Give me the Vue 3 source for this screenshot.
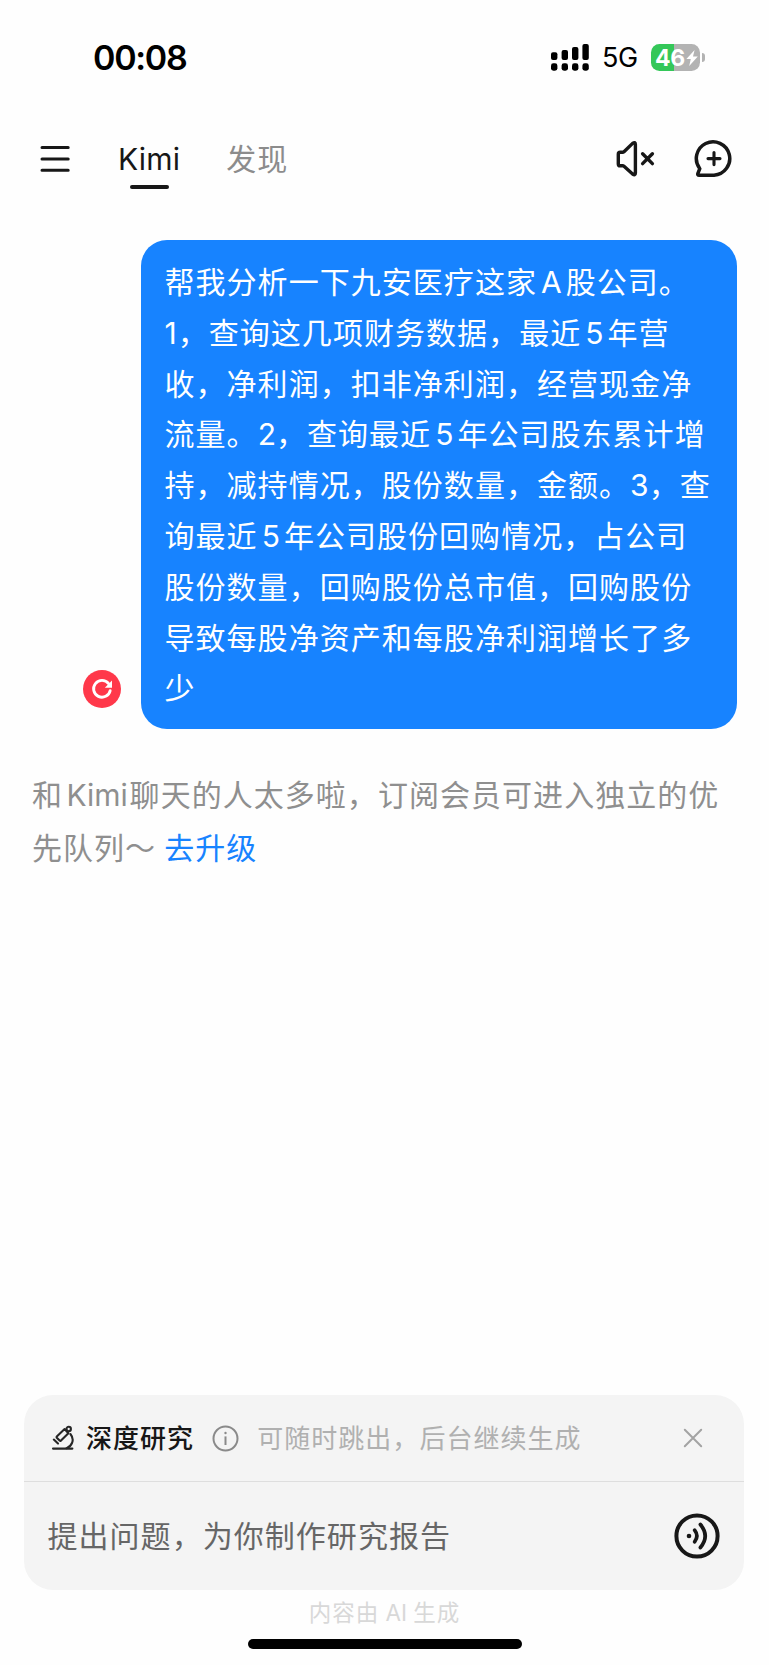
<template>
  <div class="screen">
    <div class="status-bar">
      <span class="clock">00:08</span>
      <div class="status-right">
        <svg class="signal" width="38" height="27" viewBox="0 0 38 27">
          <rect x="0" y="8.3" width="6.4" height="7.7" rx="2" />
          <rect x="10.6" y="6" width="6.4" height="10" rx="2" />
          <rect x="21" y="3" width="6.4" height="13" rx="2" />
          <rect x="31.4" y="0" width="6.4" height="16" rx="2" />
          <rect v-for="x in [0, 10.6, 21, 31.4]" :key="x" :x="x" y="19.3" width="6.4" height="7.4" rx="2.4" />
        </svg>
        <span class="network">5G</span>
        <div class="battery">
          <span class="battery-level">46</span>
          <svg width="12" height="16" viewBox="0 0 12 16">
            <path d="M8.6 0 L0.4 9 H4.8 L3.2 16 L11.8 6.6 H7 Z" fill="#fff" />
          </svg>
        </div>
        <span class="battery-nub"></span>
      </div>
    </div>

    <header class="nav">
      <svg class="menu" width="31" height="28" viewBox="0 0 31 28">
        <path d="M2 2.6H28.2M2 14H28.2M2 25.3H28.2" class="stroke" stroke-width="3" />
      </svg>
      <span class="tab tab--active">Kimi</span>
      <span class="tab">发现</span>
      <div class="nav-actions">
        <svg width="40" height="40" viewBox="0 0 40 40">
          <path d="M3.3 15.2 Q3.3 13.3 5.2 13.3 H7.6 Q8.4 13.3 9 12.8 L17.6 4.4 Q20.4 2.4 20.4 5.4 V34 Q20.4 37 17.6 35 L9 27.3 Q8.4 26.8 7.6 26.8 H5.2 Q3.3 26.8 3.3 24.9 Z" class="stroke" stroke-width="3.4" />
          <path d="M27.6 14.8 L37.4 24.6 M37.4 14.8 L27.6 24.6" class="stroke" stroke-width="3.4" />
        </svg>
        <svg width="40" height="40" viewBox="0 0 40 40">
          <path d="M20 36.2 H5.1 Q3.3 36.2 3.9 34.4 L5.8 29.7 A16.7 16.7 0 1 1 20 36.2 Z" class="stroke" stroke-width="3.5" />
          <path d="M20 13.6V25.6M14 19.6H26" class="stroke" stroke-width="3.1" />
        </svg>
      </div>
    </header>

    <main class="chat">
      <div class="message">
        <svg class="retry" width="38" height="38" viewBox="0 0 38 38">
          <circle cx="19" cy="19" r="19" fill="#ff384a" />
          <path d="M27.2 20.6 A8.4 8.4 0 1 1 25.6 13.6" stroke="#fff" stroke-width="2.8" stroke-linecap="round" fill="none" />
          <path d="M29 10.6 V17.8 H21.8 Z" fill="#fff" />
        </svg>
        <div class="bubble">
          <p v-for="(line, i) in lines" :key="i" class="bubble-line">
            <template v-for="(part, j) in line" :key="j">
              <span v-if="part.latin" class="latin" :class="part.cls">{{ part.latin }}</span>
              <template v-else>{{ part }}</template>
            </template>
          </p>
        </div>
      </div>

      <div class="notice">
        <p>和<span class="latin latin--kimi">Kimi</span>聊天的人太多啦，订阅会员可进入独立的优</p>
        <p>先队列～<a class="upgrade">去升级</a></p>
      </div>
    </main>

    <section class="composer">
      <div class="mode">
        <svg class="microscope" width="24" height="26" viewBox="0 0 24 26">
          <path d="M2 23.6H21.4" class="icon-line" />
          <path d="M2.8 14.6L7 18.6" class="icon-line" />
          <path d="M5.8 11.4L13.6 4L17.4 8.2L10 15.6Q9.2 16.2 8.6 15.6L5.8 12.8Q5.2 12 5.8 11.4Z" class="icon-line" />
          <circle cx="17.7" cy="4" r="2.2" class="icon-line" />
          <path d="M19.4 9Q23 13.4 21 18Q19.6 21.6 15.6 23.2" class="icon-line" />
        </svg>
        <span class="mode-name">深度研究</span>
        <svg class="info" width="27" height="27" viewBox="0 0 27 27">
          <circle cx="13.5" cy="13.5" r="12" />
          <path d="M13.5 11.4V20" />
          <circle cx="13.5" cy="8" r="1.2" class="info-dot" />
        </svg>
        <span class="mode-hint">可随时跳出，后台继续生成</span>
        <svg class="close" width="20" height="20" viewBox="0 0 20 20">
          <path d="M1.8 1.8L18.2 18.2M18.2 1.8L1.8 18.2" />
        </svg>
      </div>
      <div class="field">
        <span class="placeholder">提出问题，为你制作研究报告</span>
        <svg width="46" height="46" viewBox="0 0 46 46">
          <circle cx="23" cy="23" r="20.6" class="stroke" stroke-width="4" />
          <circle cx="15" cy="23" r="2.3" fill="#171717" />
          <path d="M20.6 17.2Q25.2 23 20.6 28.8" class="stroke" stroke-width="3.7" />
          <path d="M26.4 11.5Q36 23 26.4 34.5" class="stroke" stroke-width="3.7" />
        </svg>
      </div>
    </section>

    <footer class="footer">
      <p class="disclaimer">内容由 <span class="latin">AI</span> 生成</p>
      <div class="home-indicator"></div>
    </footer>
  </div>
</template>

<script setup>
const latin = (text, cls = 'latin--spaced') => ({ latin: text, cls })

const lines = [
  ['帮我分析一下九安医疗这家', latin('A'), '股公司。'],
  [latin('1', 'latin--one'), '，查询这几项财务数据，最近', latin('5'), '年营'],
  ['收，净利润，扣非净利润，经营现金净'],
  ['流量。', latin('2', ''), '，查询最近', latin('5'), '年公司股东累计增'],
  ['持，减持情况，股份数量，金额。', latin('3', ''), '，查'],
  ['询最近', latin('5'), '年公司股份回购情况，占公司'],
  ['股份数量，回购股份总市值，回购股份'],
  ['导致每股净资产和每股净利润增长了多'],
  ['少']
]
</script>

<style>
body {
  margin: 0;
  background: #fff;
}
</style>

<style scoped>
.screen {
  width: 769px;
  height: 1665px;
  display: flex;
  flex-direction: column;
  overflow: hidden;
  background: #fefefe;
  font-family: "Noto Sans CJK SC", sans-serif;
  font-size: 30px;
  letter-spacing: 1.04px;
  color: #171717;
}
p { margin: 0; white-space: nowrap; }
svg { display: block; flex: none; }
.stroke {
  fill: none;
  stroke: #171717;
  stroke-linecap: round;
  stroke-linejoin: round;
}
.latin { font-family: Inter, "Noto Sans CJK SC", sans-serif; letter-spacing: 0; }
.latin--spaced { margin: 0 4px 0 4px; }
.latin--one { margin-right: 1px; }
.latin--kimi { margin: 0 2px 0 3.5px; letter-spacing: -0.1px; }

/* status bar */
.status-bar {
  height: 115px;
  box-sizing: border-box;
  padding: 0 64px 0 93px;
  display: flex;
  align-items: center;
  justify-content: space-between;
  font-family: Inter, sans-serif;
  color: #000;
}
.clock { font-size: 34px; font-weight: 600; letter-spacing: -1.3px; }
.status-right { display: flex; align-items: center; }
.network {
  margin-left: 13px;
  width: 49px;
  font-size: 27px;
  letter-spacing: -0.3px;
}
.battery {
  width: 49px;
  height: 27px;
  border-radius: 8.5px;
  display: flex;
  align-items: center;
  box-sizing: border-box;
  padding-left: 4px;
  gap: 1px;
  background: linear-gradient(to right, #34c759 47%, #b3b3b3 47%);
}
.battery-level {
  font-size: 23px;
  font-weight: 700;
  letter-spacing: -0.2px;
  color: #fff;
}
.battery-nub {
  width: 3px;
  height: 9px;
  margin-left: 2px;
  border-radius: 0 4px 4px 0;
  background: #b3b3b3;
}

/* top navigation */
.nav {
  height: 88px;
  box-sizing: border-box;
  padding: 0 35px 0 40px;
  display: flex;
  align-items: center;
}
.tab {
  position: relative;
  top: -2px;
  margin-left: 46px;
  color: #8c8c8c;
}
.tab--active {
  top: -0.5px;
  margin-left: 47px;
  font-family: Inter, sans-serif;
  letter-spacing: 0.2px;
  color: #171717;
}
.tab--active::after {
  content: "";
  position: absolute;
  left: 50%;
  bottom: -12.5px;
  width: 39px;
  height: 4px;
  margin-left: -19.5px;
  border-radius: 2px;
  background: #171717;
}
.nav-actions { margin-left: auto; display: flex; gap: 39px; }

/* conversation */
.chat { flex: 1; padding: 37px 32px 0; }
.message {
  display: flex;
  align-items: flex-end;
  justify-content: flex-end;
}
.retry { margin: 0 20.5px 21px 0; }
.bubble {
  width: 596px;
  height: 489px;
  box-sizing: border-box;
  padding: 15px 0 0 23.5px;
  border-radius: 26px;
  background: #1783ff;
  color: #fff;
}
.bubble-line { height: 50.8px; line-height: 50.8px; }
.notice { margin-top: 38px; color: #8f8f8f; }
.notice p { height: 52.6px; line-height: 52.6px; }
.upgrade { margin-left: 8px; color: #1783ff; }

/* input panel */
.composer {
  flex: none;
  width: 720px;
  height: 195px;
  margin: 0 25px 0 24px;
  border-radius: 29px;
  background: #f4f4f4;
}
.mode {
  height: 87px;
  box-sizing: border-box;
  padding: 0 41px 0 27px;
  display: flex;
  align-items: center;
  border-bottom: 1px solid #dedede;
  font-size: 26px;
}
.icon-line {
  fill: none;
  stroke: #262626;
  stroke-width: 2.1;
  stroke-linecap: round;
  stroke-linejoin: round;
}
.mode-name,
.mode-hint { line-height: 38px; padding-bottom: 2px; }
.mode-name { margin-left: 11px; font-weight: 500; }
.info { margin-left: 18px; }
.info circle, .info path { fill: none; stroke: #8a8a8a; stroke-width: 2; }
.info .info-dot { fill: #8a8a8a; stroke: none; }
.mode-hint { margin-left: 18px; color: #b0b0b0; }
.close { margin-left: auto; }
.close path { stroke: #a3a3a3; stroke-width: 2; stroke-linecap: round; }
.field {
  height: 108px;
  box-sizing: border-box;
  padding: 0 24px 0 23.5px;
  display: flex;
  align-items: center;
  justify-content: space-between;
}
.placeholder { padding-bottom: 4px; color: #666; }

.footer {
  height: 75px;
  flex: none;
  display: flex;
  flex-direction: column;
  align-items: center;
}
.disclaimer {
  height: 49px;
  line-height: 42px;
  font-size: 22.5px;
  color: #d8d8d8;
}
.home-indicator {
  width: 274px;
  height: 10px;
  border-radius: 5px;
  background: #000;
}
</style>
